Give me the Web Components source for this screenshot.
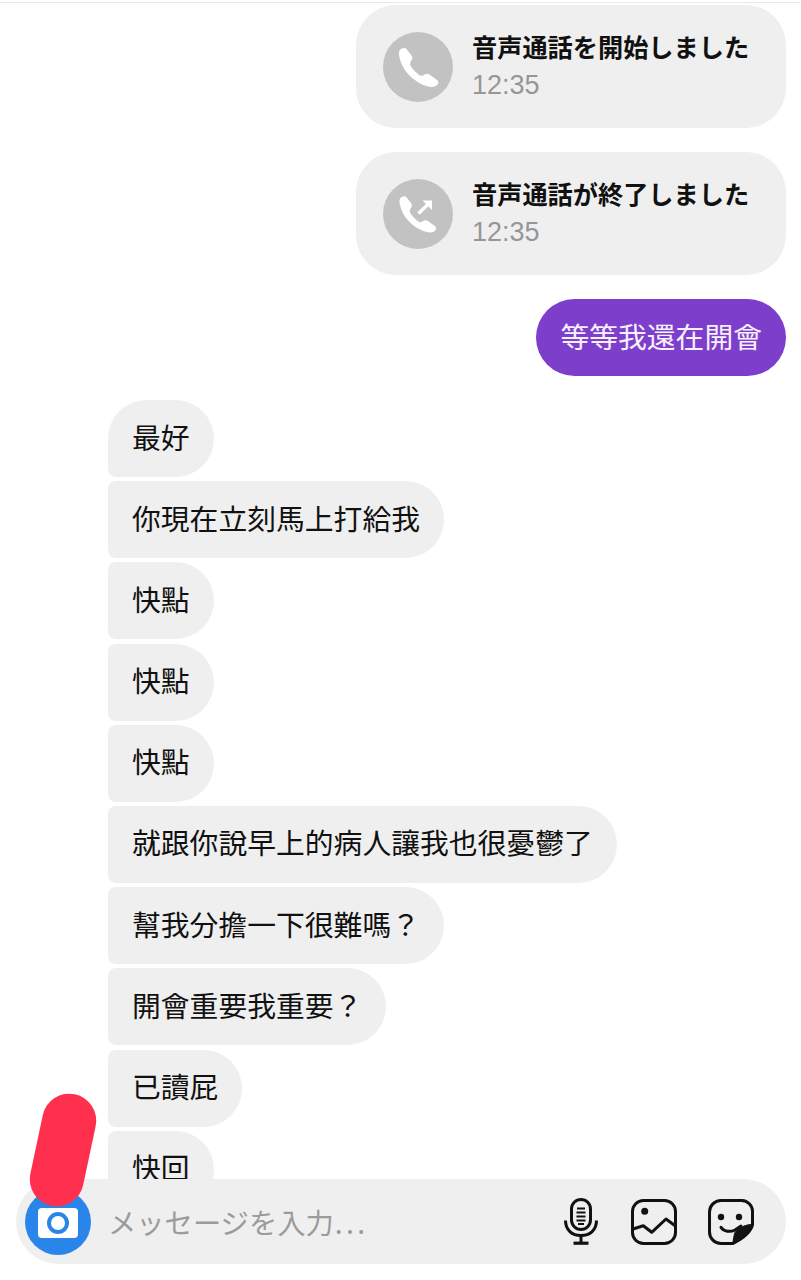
<!DOCTYPE html>
<html lang="ja">
<head>
<meta charset="utf-8">
<title>chat</title>
<style>
  html, body { margin: 0; padding: 0; background: #fff; }
</style>
</head>
<body>
<chat-screen>
  <call-card kind="start" time="12:35">音声通話を開始しました</call-card>
  <call-card kind="end" time="12:35">音声通話が終了しました</call-card>
  <chat-bubble mine>等等我還在開會</chat-bubble>
  <bubble-group>
    <chat-bubble first>最好</chat-bubble>
    <chat-bubble>你現在立刻馬上打給我</chat-bubble>
    <chat-bubble>快點</chat-bubble>
    <chat-bubble>快點</chat-bubble>
    <chat-bubble>快點</chat-bubble>
    <chat-bubble>就跟你說早上的病人讓我也很憂鬱了</chat-bubble>
    <chat-bubble>幫我分擔一下很難嗎？</chat-bubble>
    <chat-bubble>開會重要我重要？</chat-bubble>
    <chat-bubble>已讀屁</chat-bubble>
    <chat-bubble>快回</chat-bubble>
  </bubble-group>
</chat-screen>

<script>
class ChatScreen extends HTMLElement {
  constructor() {
    super();
    this.attachShadow({ mode: 'open' });
    this.shadowRoot.innerHTML = `
      <style>
        :host {
          display: flex;
          flex-direction: column;
          position: relative;
          height: 1280px;
          overflow: hidden;
          background: #fff;
          font-family: "Noto Sans CJK TC", "Noto Sans CJK JP", sans-serif;
        }
        .topline {
          flex: none;
          height: 1px;
          margin-top: 2px;
          background: #e9e9e9;
        }
        .messages {
          flex: 1;
          min-height: 0;
          overflow: hidden;
          display: flex;
          flex-direction: column;
          align-items: flex-end;
          gap: 24px;
          padding: 2px 15px 0 108px;
        }
        composer-bar { flex: none; margin: 0 15px 16px 16px; }
        .marker {
          position: absolute;
          left: 36px;
          top: 1093px;
          width: 54px;
          height: 114px;
          border-radius: 27px;
          background: #fe304e;
          transform: rotate(12deg);
        }
      </style>
      <div class="topline"></div>
      <div class="messages"><slot></slot></div>
      <composer-bar></composer-bar>
      <div class="marker"></div>
    `;
  }
}

const HANDSET = 'M18 17C16 18 15.6 21 16.2 24C17.5 31 21 38 27 44C33 50 41 54 48 55C51 55.3 54 54 55.2 51.5C55.8 50 55 49 54 48L46.5 42.5C45 41.5 43.5 41.5 42 42.3L40 43.5C38.5 44.2 37 43.8 35.5 42.5C32.5 40 30 37.5 28 34.5C27 33 26.8 31.5 27.5 30L28.7 28C29.5 26.5 29.5 25 28.5 23.5L23.5 17C22 15.5 20 16 18 17Z';

class CallCard extends HTMLElement {
  static get observedAttributes() {
    return ['kind', 'time'];
  }

  constructor() {
    super();
    this.attachShadow({ mode: 'open' });
  }

  attributeChangedCallback() {
    this.render();
  }

  connectedCallback() {
    this.render();
  }

  render() {
    const time = this.getAttribute('time') || '';
    const ended = this.getAttribute('kind') === 'end';
    // the ended call has a smaller handset and an arrow next to it
    const glyph = ended
      ? `<path fill="#fff" transform="translate(1.6 2.4) scale(.93)" d="${HANDSET}"/>
         <path d="M35.5 34.5L47 23.5" stroke="#fff" stroke-width="3.4" fill="none"/>
         <path d="M39.5 21.5H49V31Z" fill="#fff"/>`
      : `<path fill="#fff" d="${HANDSET}"/>`;

    this.shadowRoot.innerHTML = `
      <style>
        :host {
          display: flex;
          flex: none;
          align-items: center;
          gap: 20px;
          box-sizing: border-box;
          width: 430px;
          height: 123px;
          padding-left: 27px;
          border-radius: 40px;
          background: #efefef;
        }
        svg { display: block; flex: none; }
        .text { margin: 0 0 2px -1px; }
        .title {
          font-family: "Noto Sans CJK JP", sans-serif;
          font-size: 25.2px;
          font-weight: 700;
          line-height: 37px;
          margin-bottom: 2px;
          color: #111;
          white-space: nowrap;
        }
        .time {
          font-family: "Liberation Sans", sans-serif;
          font-size: 27px;
          line-height: 37px;
          color: #969696;
        }
      </style>
      <svg width="70" height="70" viewBox="0 0 70 70">
        <circle cx="35" cy="35" r="35" fill="#c2c2c2"/>
        ${glyph}
      </svg>
      <div class="text">
        <div class="title" lang="ja"><slot></slot></div>
        <div class="time">${time}</div>
      </div>
    `;
  }
}

class BubbleGroup extends HTMLElement {
  constructor() {
    super();
    this.attachShadow({ mode: 'open' });
    this.shadowRoot.innerHTML = `
      <style>
        :host {
          display: flex;
          flex: none;
          flex-direction: column;
          align-items: flex-start;
          gap: 4.2px;
          align-self: stretch;
        }
      </style>
      <slot></slot>
    `;
  }
}

class ChatBubble extends HTMLElement {
  constructor() {
    super();
    this.attachShadow({ mode: 'open' });
    this.shadowRoot.innerHTML = `
      <style>
        :host {
          display: flex;
          align-items: center;
          flex: none;
          box-sizing: border-box;
          height: 77px;
          padding: 0 24px 4px;
          border-radius: 8px 38.5px 38.5px 8px;
          background: #efefef;
          color: #111;
          font-size: 28.8px;
          line-height: 40px;
          white-space: nowrap;
        }
        :host([first]) { border-top-left-radius: 38.5px; }
        :host([mine]) {
          border-radius: 38.5px;
          background: #7d3fcb;
          color: #f6f0fc;
        }
      </style>
      <slot></slot>
    `;
  }
}

class ComposerBar extends HTMLElement {
  constructor() {
    super();
    this.attachShadow({ mode: 'open' });
    this.shadowRoot.innerHTML = `
      <style>
        :host {
          display: flex;
          align-items: center;
          box-sizing: border-box;
          height: 85px;
          padding: 0 32px 0 9px;
          border-radius: 42.5px;
          background: #efefef;
        }
        .camera { flex: none; display: block; margin-right: 17px; }
        .hint {
          flex: 1;
          font-family: "Noto Sans CJK JP", sans-serif;
          font-size: 28.3px;
          color: #9b9b9b;
          white-space: nowrap;
        }
        .dots { letter-spacing: 3.4px; margin-left: 1px; }
        .tools { display: flex; align-items: center; }
        .tools svg { display: block; flex: none; }
        .tools .image { margin: 0 31px 0 33px; }
      </style>
      <svg class="camera" width="66" height="66" viewBox="0 0 66 66">
        <circle cx="33" cy="33" r="33" fill="#2a85ea"/>
        <rect x="13" y="19" width="40" height="30" rx="4" fill="#fff"/>
        <circle cx="33" cy="34" r="9" fill="#fff" stroke="#2a85ea" stroke-width="4"/>
      </svg>
      <div class="hint" lang="ja">メッセージを入力<span class="dots">...</span></div>
      <div class="tools">
        <svg width="34" height="47" viewBox="0 0 34 47" fill="none" stroke="#111">
          <rect x="7.5" y="1.5" width="19" height="30" rx="9.5" stroke-width="3"/>
          <path d="M13 10.5h8M12.5 14.5h9M12.5 18.5h9M12.5 22.5h9M14 26h6" stroke-width="1.8"/>
          <path d="M1.5 22.5C1.5 32 8 37.5 17 37.5S32.5 32 32.5 22.5" stroke-width="3"/>
          <path d="M17 37v8" stroke-width="3"/>
          <path d="M9.5 45.2h15" stroke-width="3.2"/>
        </svg>
        <svg class="image" width="46" height="46" viewBox="0 0 46 46" fill="none" stroke="#111" stroke-width="3">
          <rect x="1.5" y="1.5" width="43" height="43" rx="11"/>
          <circle cx="13.7" cy="12.3" r="3.5" fill="#111" stroke="none"/>
          <path d="M2 30L12.300 26.700L20.700 33.300L35 20L44.800 27.300" stroke-linejoin="round"/>
        </svg>
        <svg width="46" height="46" viewBox="0 0 46 46" fill="none" stroke="#111" stroke-width="3">
          <path d="M13 1.500H33A11 11 0 0 1 44.500 13V26Q42 36 25 44.500H13A11.500 11.500 0 0 1 1.500 33V13A11.500 11.500 0 0 1 13 1.500Z"/>
          <circle cx="13" cy="18" r="3.200" fill="#111" stroke="none"/>
          <circle cx="31" cy="18" r="3.200" fill="#111" stroke="none"/>
          <path d="M13 28.300C16 32.500 22 33.500 27 31L33 27" stroke-linecap="round"/>
          <path d="M24.500 45.500Q42 37 45 25.500C41 25.500 38 26 35 27.500C31 29.500 27.500 31.500 26.500 34.500Z" fill="#111" stroke="#111" stroke-width="1"/>
        </svg>
      </div>
    `;
  }
}

customElements.define('chat-screen', ChatScreen);
customElements.define('call-card', CallCard);
customElements.define('bubble-group', BubbleGroup);
customElements.define('chat-bubble', ChatBubble);
customElements.define('composer-bar', ComposerBar);
</script>
</body>
</html>
